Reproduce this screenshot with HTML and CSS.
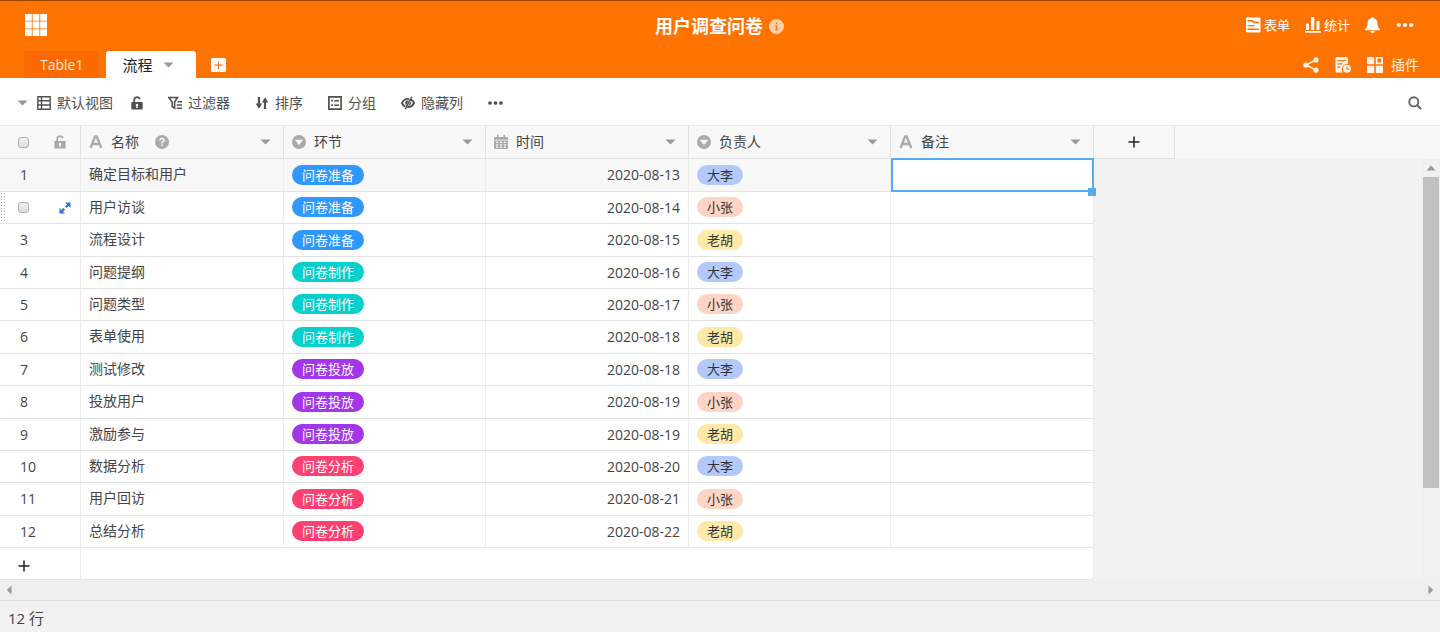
FILE: index.html
```html
<!DOCTYPE html>
<html lang="zh-CN">
<head>
<meta charset="utf-8">
<meta name="viewport" content="width=device-width, initial-scale=1">
<title>用户调查问卷</title>
<link rel="stylesheet" href="styles.css">
</head>
<body>
<svg class="sprite" aria-hidden="true">
  <symbol id="i-caret" viewBox="0 0 11 6"><path d="M0.5 0.5h10l-5 5z"/></symbol>
  <symbol id="i-dots" viewBox="0 0 17 6"><circle cx="2.3" cy="3" r="2.1"/><circle cx="8.5" cy="3" r="2.1"/><circle cx="14.7" cy="3" r="2.1"/></symbol>
  <symbol id="i-lock" viewBox="0 0 12 14"><path d="M3.2 7V4a2.9 2.9 0 0 1 5.7-.8" fill="none" stroke="currentColor" stroke-width="1.7"/><path fill-rule="evenodd" d="M1.2 6h9.6q.9 0 .9.9v5.7q0 .9-.9.9H1.2q-.9 0-.9-.9V6.900q0-.9.9-.9zM6 7.700a1.300 1.300 0 0 0-.7 2.400V12h1.400v-1.900A1.300 1.300 0 0 0 6 7.700z"/></symbol>
  <symbol id="i-letter" viewBox="0 0 14 14"><path d="M1.500 13 6.100 1.500h1.600L12.300 13M3.400 9h7" fill="none" stroke="currentColor" stroke-width="2.300"/></symbol>
  <symbol id="i-select" viewBox="0 0 14 14"><path fill-rule="evenodd" d="M7 0a7 7 0 1 1 0 14A7 7 0 0 1 7 0zM2.800 4.800 7 10.300l4.200-5.500z"/></symbol>
  <symbol id="i-calendar" viewBox="0 0 14 14"><path fill-rule="evenodd" d="M3 0h1.600v2h4.800V0H11v2h2q1 0 1 1v1.700H0V3q0-1 1-1h2zM0 5.500h14V13q0 1-1 1H1q-1 0-1-1zM2 6.800v1.200h2.200V6.800zm3.900 0v1.200h2.200V6.800zm3.900 0v1.200H12V6.800zM2 9.200v1.200h2.200V9.200zm3.900 0v1.200h2.200V9.200zm3.900 0v1.200H12V9.200zM2 11.600v1.200h2.200v-1.200zm3.900 0v1.200h2.200v-1.200zm3.900 0v1.200H12v-1.200z"/></symbol>
  <symbol id="i-plus" viewBox="0 0 12 12"><path d="M6 0.500v11M0.500 6h11" fill="none" stroke="currentColor" stroke-width="1.500"/></symbol>
</svg>

<header class="topbar">
  <div class="title-row">
    <button class="icon-btn apps" aria-label="应用">
      <svg width="22" height="22" viewBox="0 0 22 22"><path d="M0 0h6.800v6.800H0zM7.600 0h6.800v6.800H7.600zM15.200 0H22v6.800h-6.800zM0 7.600h6.800v6.800H0zM7.600 7.600h6.800v6.800H7.600zM15.200 7.600H22v6.800h-6.800zM0 15.200h6.800V22H0zM7.600 15.200h6.800V22H7.600zM15.200 15.200H22V22h-6.800z"/></svg>
    </button>
    <div class="title-group">
      <h1 class="title">用户调查问卷</h1>
      <svg class="info" width="15" height="15" viewBox="0 0 15 15"><path fill-rule="evenodd" d="M7.500 0a7.500 7.500 0 1 1 0 15 7.500 7.500 0 0 1 0-15zM6.800 3.500v1.500h1.500V3.500zM6.200 6.300v1h.6v3h-.6v1h2.700v-1h-.6v-4z"/></svg>
    </div>
    <div class="actions">
      <button class="icon-btn small">
        <svg width="16" height="16" viewBox="0 0 16 16"><path fill-rule="evenodd" d="M2 .5h12.500q1 0 1 1v13q0 1-1 1H2q-1 0-1-1v-13q0-1 1-1zM2.500 3v1.600h4.300l1.600 1.600h5.400V4.600H9.200L7.600 3zM2.500 7.900v1.300h7.300V7.900zM2.500 11.500v1.500h11.300v-1.500z"/></svg>表单
      </button>
      <button class="icon-btn small">
        <svg width="16" height="16" viewBox="0 0 16 16"><path d="M1 6.500h3V13H1zM6 0h3.300v13H6zM11.500 4h3v9h-3zM0 14h16v1.800H0z"/></svg>统计
      </button>
      <button class="icon-btn" aria-label="通知">
        <svg width="16" height="16" viewBox="0 0 16 16"><path d="M7.500 0q1.200 0 1.300 1.300 3.700 1.100 3.700 5.200 0 4 2.300 5.300.7 1.400-.6 1.400H.8q-1.300 0-.6-1.400Q2.500 10.500 2.500 6.500q0-4.100 3.700-5.200Q6.300 0 7.500 0zM5 14h5q-.5 2-2.500 2T5 14z"/></svg>
      </button>
      <button class="icon-btn" aria-label="更多"><svg width="18" height="6"><use href="#i-dots"/></svg></button>
    </div>
  </div>
  <div class="tab-row">
    <nav class="tabs">
      <button class="tab">Table1</button>
      <button class="tab tab-active">流程<svg class="caret" width="11" height="6"><use href="#i-caret"/></svg></button>
      <button class="icon-btn add-tab" aria-label="添加表">
        <svg width="15" height="14" viewBox="0 0 15 14"><path fill-rule="evenodd" d="M1.500 0h12Q15 0 15 1.500v11q0 1.500-1.500 1.500h-12Q0 14 0 12.500v-11Q0 0 1.500 0zM6.900 3.500v3H3.500v1.200h3.400v3.300h1.200V7.700h3.400V6.500H8.100v-3z"/></svg>
      </button>
    </nav>
    <div class="tools">
      <button class="icon-btn" aria-label="分享">
        <svg width="16" height="16" viewBox="0 0 16 16"><path d="M13 2.800 3 8l10 5.200" fill="none" stroke="currentColor" stroke-width="1.500"/><circle cx="13" cy="2.900" r="2.600"/><circle cx="2.900" cy="8" r="2.600"/><circle cx="13" cy="13.100" r="2.600"/></svg>
      </button>
      <button class="icon-btn" aria-label="历史">
        <svg width="16" height="16" viewBox="0 0 16 16"><path fill-rule="evenodd" d="M1.500 0h10Q13 0 13 1.500v5.200Q7.500 7 6.800 12q0 1.800 1 3.500H1.500Q.5 15.500.5 14.500V1.200Q.5 0 1.500 0zM2.500 3v1.300H11V3zM2.500 6.300v1.300h5V6.300zM2.500 9.600v1.300H5V9.600z"/><path fill-rule="evenodd" d="M12 7.800a4 4 0 1 1 0 8 4 4 0 0 1 0-8zM11.400 9.500v3.100H14v-1.100h-1.500v-2z"/></svg>
      </button>
      <button class="icon-btn plugin">
        <svg width="16" height="16" viewBox="0 0 16 16"><path fill-rule="evenodd" d="M1 0h6.200v7.200H0V1q0-1 1-1zM8.800 0H15q1 0 1 1v6.200H8.800zM10.600 1.700v3.800h3.600V1.700zM0 8.800h7.200V16H1q-1 0-1-1zM8.800 8.800H16V15q0 1-1 1H8.800z"/></svg>插件
      </button>
    </div>
  </div>
</header>

<div class="toolbar">
  <div class="view-group">
    <button class="tool view-switch">
      <svg class="caret" width="11" height="6"><use href="#i-caret"/></svg>
      <span class="tool-label"><svg width="14" height="14" viewBox="0 0 14 14"><path d="M.8.8h12.400v12.400H.8zM4.500 1v12M1 4.800h12M1 9h12" fill="none" stroke="currentColor" stroke-width="1.400"/></svg>默认视图</span>
    </button>
    <button class="tool" aria-label="锁定视图"><svg width="12" height="14"><use href="#i-lock"/></svg></button>
  </div>
  <button class="tool tool-label">
    <svg width="14" height="14" viewBox="0 0 14 14"><path d="M.8 1.500h8.700L6.600 6v6.200L4.200 10.500V6z" fill="none" stroke="currentColor" stroke-width="1.600"/><path d="M9.500 5.700H14M8.700 9H14M8.700 12.300H14" fill="none" stroke="currentColor" stroke-width="1.600"/></svg>过滤器
  </button>
  <button class="tool tool-label">
    <svg width="14" height="14" viewBox="0 0 14 14"><path d="M4 1v8.500M10 13V4.500" fill="none" stroke="currentColor" stroke-width="2.200"/><path d="M.6 7.500h6.500L4 12.800zM6.900 6.500h6.500L10 1.200z"/></svg>排序
  </button>
  <button class="tool tool-label">
    <svg width="14" height="14" viewBox="0 0 14 14"><path d="M.9.900h12.200v12.200H.9z" fill="none" stroke="currentColor" stroke-width="1.700"/><path d="M3.200 3.800H5v1.800H3.200zM6.200 4h4.800v1.400H6.200zM3.200 8.300H5v1.800H3.200zM6.200 8.500h4.800v1.400H6.200z"/></svg>分组
  </button>
  <button class="tool tool-label">
    <svg width="14" height="14" viewBox="0 0 14 14"><path d="M8 3Q3.500 2 .9 7q1.200 2.700 3.400 3.700M9.600 3.300Q12 4.500 13.100 7q-2.200 4.300-6.800 4.100" fill="none" stroke="currentColor" stroke-width="1.900"/><path d="M10.800.8 4.200 13.200" fill="none" stroke="currentColor" stroke-width="1.500"/><path d="M7.800 4.300Q4.200 4.500 4.100 7q.1 1.400 1.100 2.200zM9.900 5.300q1.200 3.200-2.700 4.800z"/></svg>隐藏列
  </button>
  <button class="tool" aria-label="更多操作"><svg width="15" height="6"><use href="#i-dots"/></svg></button>
  <button class="tool search" aria-label="搜索">
    <svg width="14" height="14" viewBox="0 0 14 14"><circle cx="5.800" cy="5.800" r="4.600" fill="none" stroke="currentColor" stroke-width="1.900"/><path d="m9 9 4 4" stroke="currentColor" stroke-width="2.200"/></svg>
  </button>
</div>

<main class="sheet">
  <div class="sheet-view">
    <table class="grid">
      <colgroup>
        <col class="c-index"><col class="c-a"><col class="c-b"><col class="c-a"><col class="c-b"><col class="c-a"><col class="c-index"><col>
      </colgroup>
      <thead>
        <tr>
          <th><div class="head head-index"><input class="check" type="checkbox" aria-label="全选"><svg width="12" height="14"><use href="#i-lock"/></svg></div></th>
          <th><div class="head"><svg width="14" height="14"><use href="#i-letter"/></svg><span>名称</span><svg class="help" width="14" height="14" viewBox="0 0 14 14"><circle cx="7" cy="7" r="7"/><path d="M4.900 5.500Q5 3.500 7 3.500t2.100 1.800Q9.100 6.500 7 7.600v.9M7 9.500v1.500" fill="none" stroke="#f8f8f8" stroke-width="1.500"/></svg><svg class="menu" width="11" height="6"><use href="#i-caret"/></svg></div></th>
          <th><div class="head"><svg width="14" height="14"><use href="#i-select"/></svg><span>环节</span><svg class="menu" width="11" height="6"><use href="#i-caret"/></svg></div></th>
          <th><div class="head"><svg width="14" height="14"><use href="#i-calendar"/></svg><span>时间</span><svg class="menu" width="11" height="6"><use href="#i-caret"/></svg></div></th>
          <th><div class="head"><svg width="14" height="14"><use href="#i-select"/></svg><span>负责人</span><svg class="menu" width="11" height="6"><use href="#i-caret"/></svg></div></th>
          <th><div class="head"><svg width="14" height="14"><use href="#i-letter"/></svg><span>备注</span><svg class="menu" width="11" height="6"><use href="#i-caret"/></svg></div></th>
          <th><button class="plus add-col" aria-label="添加列"><svg width="12" height="12"><use href="#i-plus"/></svg></button></th>
          <th class="rest"></th>
        </tr>
      </thead>
      <tbody>
        <tr class="current"><td class="num">1</td><td>确定目标和用户</td><td><span class="tag blue">问卷准备</span></td><td class="date">2020-08-13</td><td><span class="tag p-blue">大李</span></td><td class="selected"><input class="editor" type="text" aria-label="备注"><span class="fill-handle"></span></td></tr>
        <tr><td class="num hovered"><div class="row-tools"><input class="check" type="checkbox" aria-label="选择第 2 行"><button class="expand" aria-label="展开"><svg width="12" height="12" viewBox="0 0 12 12"><path d="M6 .5h5.500V6zM.5 6v5.500H6z"/><path d="m10 2-3.300 3.300M2 10l3.300-3.300" stroke="currentColor" stroke-width="2.300"/></svg></button></div></td><td>用户访谈</td><td><span class="tag blue">问卷准备</span></td><td class="date">2020-08-14</td><td><span class="tag p-pink">小张</span></td><td></td></tr>
        <tr><td class="num">3</td><td>流程设计</td><td><span class="tag blue">问卷准备</span></td><td class="date">2020-08-15</td><td><span class="tag p-yellow">老胡</span></td><td></td></tr>
        <tr><td class="num">4</td><td>问题提纲</td><td><span class="tag teal">问卷制作</span></td><td class="date">2020-08-16</td><td><span class="tag p-blue">大李</span></td><td></td></tr>
        <tr><td class="num">5</td><td>问题类型</td><td><span class="tag teal">问卷制作</span></td><td class="date">2020-08-17</td><td><span class="tag p-pink">小张</span></td><td></td></tr>
        <tr><td class="num">6</td><td>表单使用</td><td><span class="tag teal">问卷制作</span></td><td class="date">2020-08-18</td><td><span class="tag p-yellow">老胡</span></td><td></td></tr>
        <tr><td class="num">7</td><td>测试修改</td><td><span class="tag purple">问卷投放</span></td><td class="date">2020-08-18</td><td><span class="tag p-blue">大李</span></td><td></td></tr>
        <tr><td class="num">8</td><td>投放用户</td><td><span class="tag purple">问卷投放</span></td><td class="date">2020-08-19</td><td><span class="tag p-pink">小张</span></td><td></td></tr>
        <tr><td class="num">9</td><td>激励参与</td><td><span class="tag purple">问卷投放</span></td><td class="date">2020-08-19</td><td><span class="tag p-yellow">老胡</span></td><td></td></tr>
        <tr><td class="num">10</td><td>数据分析</td><td><span class="tag red">问卷分析</span></td><td class="date">2020-08-20</td><td><span class="tag p-blue">大李</span></td><td></td></tr>
        <tr><td class="num">11</td><td>用户回访</td><td><span class="tag red">问卷分析</span></td><td class="date">2020-08-21</td><td><span class="tag p-pink">小张</span></td><td></td></tr>
        <tr><td class="num">12</td><td>总结分析</td><td><span class="tag red">问卷分析</span></td><td class="date">2020-08-22</td><td><span class="tag p-yellow">老胡</span></td><td></td></tr>
      </tbody>
      <tfoot>
        <tr><td class="add-row"><button class="plus" aria-label="添加行"><svg width="12" height="12"><use href="#i-plus"/></svg></button></td><td colspan="5"></td></tr>
      </tfoot>
    </table>
  </div>
  <div class="vscroll" aria-hidden="true">
    <div class="vtrack"><svg width="10" height="6" viewBox="0 0 10 6"><path d="m5 .5 4.500 5h-9z"/></svg><div class="vthumb"></div></div>
  </div>
</main>
<div class="hscroll" aria-hidden="true">
  <svg width="6" height="10" viewBox="0 0 6 10"><path d="M5.500.5v9L.8 5z"/></svg>
  <svg width="6" height="10" viewBox="0 0 6 10"><path d="M.5.5v9L5.200 5z"/></svg>
</div>
<footer class="status">12 行</footer>
</body>
</html>
```

FILE: styles.css
```css
* {
  box-sizing: border-box;
}

body {
  margin: 0;
  min-height: 100vh;
  display: flex;
  flex-direction: column;
  background: #f2f2f2;
  color: #444;
  font: 14px/20px "Open Sans", "Noto Sans CJK SC", sans-serif;
}

svg {
  display: block;
  flex: none;
  fill: currentColor;
}

.sprite {
  position: absolute;
  width: 0;
  height: 0;
}

button {
  display: flex;
  align-items: center;
  padding: 0;
  border: 0;
  background: none;
  color: inherit;
  font: inherit;
  white-space: nowrap;
  cursor: pointer;
}

.caret {
  color: #999;
}

/* Top bar */
.topbar {
  border-top: 1px solid #9a4700;
  background: #ff7300;
  color: #fff;
}

.title-row {
  display: grid;
  grid-template-columns: 1fr auto 1fr;
  align-items: center;
  height: 50px;
  padding: 0 26px 2px 25px;
}

.apps {
  justify-self: start;
}

.title-group {
  display: flex;
  align-items: center;
  gap: 6px;
  padding-top: 2px;
}

.title {
  margin: 0;
  font-size: 18px;
  line-height: 26px;
}

.info {
  color: #ffd0a8;
}

.icon-btn {
  gap: 8px;
}

.small {
  gap: 3px;
  font-size: 13px;
}

.actions {
  display: flex;
  align-items: center;
  justify-self: end;
  gap: 15px;
}

.tab-row {
  display: flex;
  justify-content: space-between;
  height: 27px;
  padding: 0 21px 0 24px;
}

.tabs {
  display: flex;
  gap: 7px;
}

.tab {
  padding: 0 16px;
  background: #fb6a00;
  color: #ffe9d8;
}

.tab-active {
  gap: 11px;
  padding-right: 22px;
  border-radius: 3px 3px 0 0;
  background: #fff;
  color: #222;
  font-size: 15px;
}

.add-tab {
  padding-left: 8px;
}

.tools {
  display: flex;
  align-items: center;
  gap: 16px;
  color: #fff4ea;
}

/* View toolbar */
.toolbar {
  display: flex;
  align-items: center;
  gap: 25px;
  height: 48px;
  padding: 2px 18px 0 17px;
  border-bottom: 1px solid #e8e8e8;
  background: #fff;
  color: #505050;
}

.view-group {
  display: flex;
  gap: 18px;
}

.view-switch {
  gap: 9px;
}

.tool-label {
  display: flex;
  align-items: center;
  gap: 6px;
}

.search {
  margin-left: auto;
  color: #666;
}

/* Sheet */
.sheet {
  display: flex;
}

.sheet-view {
  flex: 1;
  min-width: 0;
}

.grid {
  width: 100%;
  table-layout: fixed;
  border-collapse: separate;
  border-spacing: 0;
}

.c-index {
  width: 81px;
}

.c-a {
  width: 203px;
}

.c-b {
  width: 202px;
}

.grid th,
.grid td {
  height: 32px;
  padding: 0 8px 2px;
  border-right: 1px solid #ececec;
  border-bottom: 1px solid #e2e2e2;
  background: #fff;
  font-weight: 400;
  text-align: left;
  white-space: nowrap;
}

.grid th {
  height: 33px;
  padding: 0 8px;
  border-right-color: #e2e2e2;
  background: #f8f8f8;
}

/* Spreads the leftover pixels of the row pitch over the body */
.grid tbody tr:nth-child(5n + 1) td,
.grid tbody tr:nth-child(5n + 3) td {
  height: 33px;
}

.grid th.rest {
  border-right: 0;
  border-bottom-color: #f2f2f2;
}

.grid .current td {
  background: #f8f8f8;
}

.head {
  display: flex;
  align-items: center;
  gap: 8px;
  color: #aaa;
}

.head span {
  color: #444;
}

.help {
  margin-left: 8px;
}

.menu {
  margin-left: auto;
  margin-right: 4px;
  color: #999;
}

.head-index,
.row-tools {
  display: flex;
  align-items: center;
  justify-content: space-between;
  padding: 0 6px 0 10px;
}

.row-tools {
  padding: 0 1px 0 0;
}

.grid td.num {
  padding: 0 8px 0 20px;
}

.grid td.add-row {
  padding: 4px 8px 0 18px;
}

/* Dotted drag handle along the left edge */
.grid td.hovered {
  padding: 0 8px 0 18px;
  background: linear-gradient(90deg, transparent 6px, #fff 6px), radial-gradient(circle, #aaa 1px, transparent 1px) 0 0 / 3px 3px, #fff;
}

.check {
  appearance: none;
  width: 11px;
  height: 11px;
  margin: 0;
  border: 1px solid #b0b0b0;
  border-radius: 3px;
  background: linear-gradient(#f2f2f2, #dcdcdc);
}

.expand {
  color: #2f74e0;
}

.grid td.date {
  padding-bottom: 0;
  text-align: right;
}

.tag {
  display: inline-block;
  vertical-align: middle;
  padding: 0 10px;
  border-radius: 10px;
  color: #fff;
  font-size: 13px;
  line-height: 20px;
}

.blue {
  background: #2f98ff;
}

.teal {
  background: #06d0cb;
}

.purple {
  background: #a336ea;
}

.red {
  background: #fe4170;
}

.p-blue,
.p-pink,
.p-yellow {
  color: #333;
}

.p-blue {
  background: #b3c9fc;
}

.p-pink {
  background: #fed4c5;
}

.p-yellow {
  background: #ffe9a8;
}

.grid td.selected {
  position: relative;
}

.editor {
  position: absolute;
  inset: -1px -1px -1px 0;
  width: 100%;
  min-width: calc(100% + 1px);
  padding: 0 8px;
  border: 2px solid #58aaee;
  outline: 0;
  background: #fff;
  color: inherit;
  font: inherit;
}

.fill-handle {
  position: absolute;
  right: -3px;
  bottom: -5px;
  z-index: 1;
  width: 8px;
  height: 8px;
  background: #58aaee;
}

.plus {
  color: #222;
}

.add-col {
  margin: 0 auto;
}

/* Scroll bars */
.vscroll {
  width: 18px;
  padding-top: 33px;
  background: #f8f8f8;
}

.vtrack {
  display: flex;
  flex-direction: column;
  align-items: center;
  gap: 6px;
  height: 100%;
  padding: 6px 1px 0;
  background: #f0f0f0;
  color: #999;
}

.vthumb {
  width: 100%;
  height: 75%;
  background: #c1c1c1;
}

.hscroll {
  display: flex;
  align-items: center;
  justify-content: space-between;
  height: 20px;
  padding: 0 6px;
  background: #efefef;
  color: #999;
}

.status {
  flex: 1;
  padding: 7px 8px 4px;
  border-top: 1px solid #dcdcdc;
  font-size: 15px;
}
```
